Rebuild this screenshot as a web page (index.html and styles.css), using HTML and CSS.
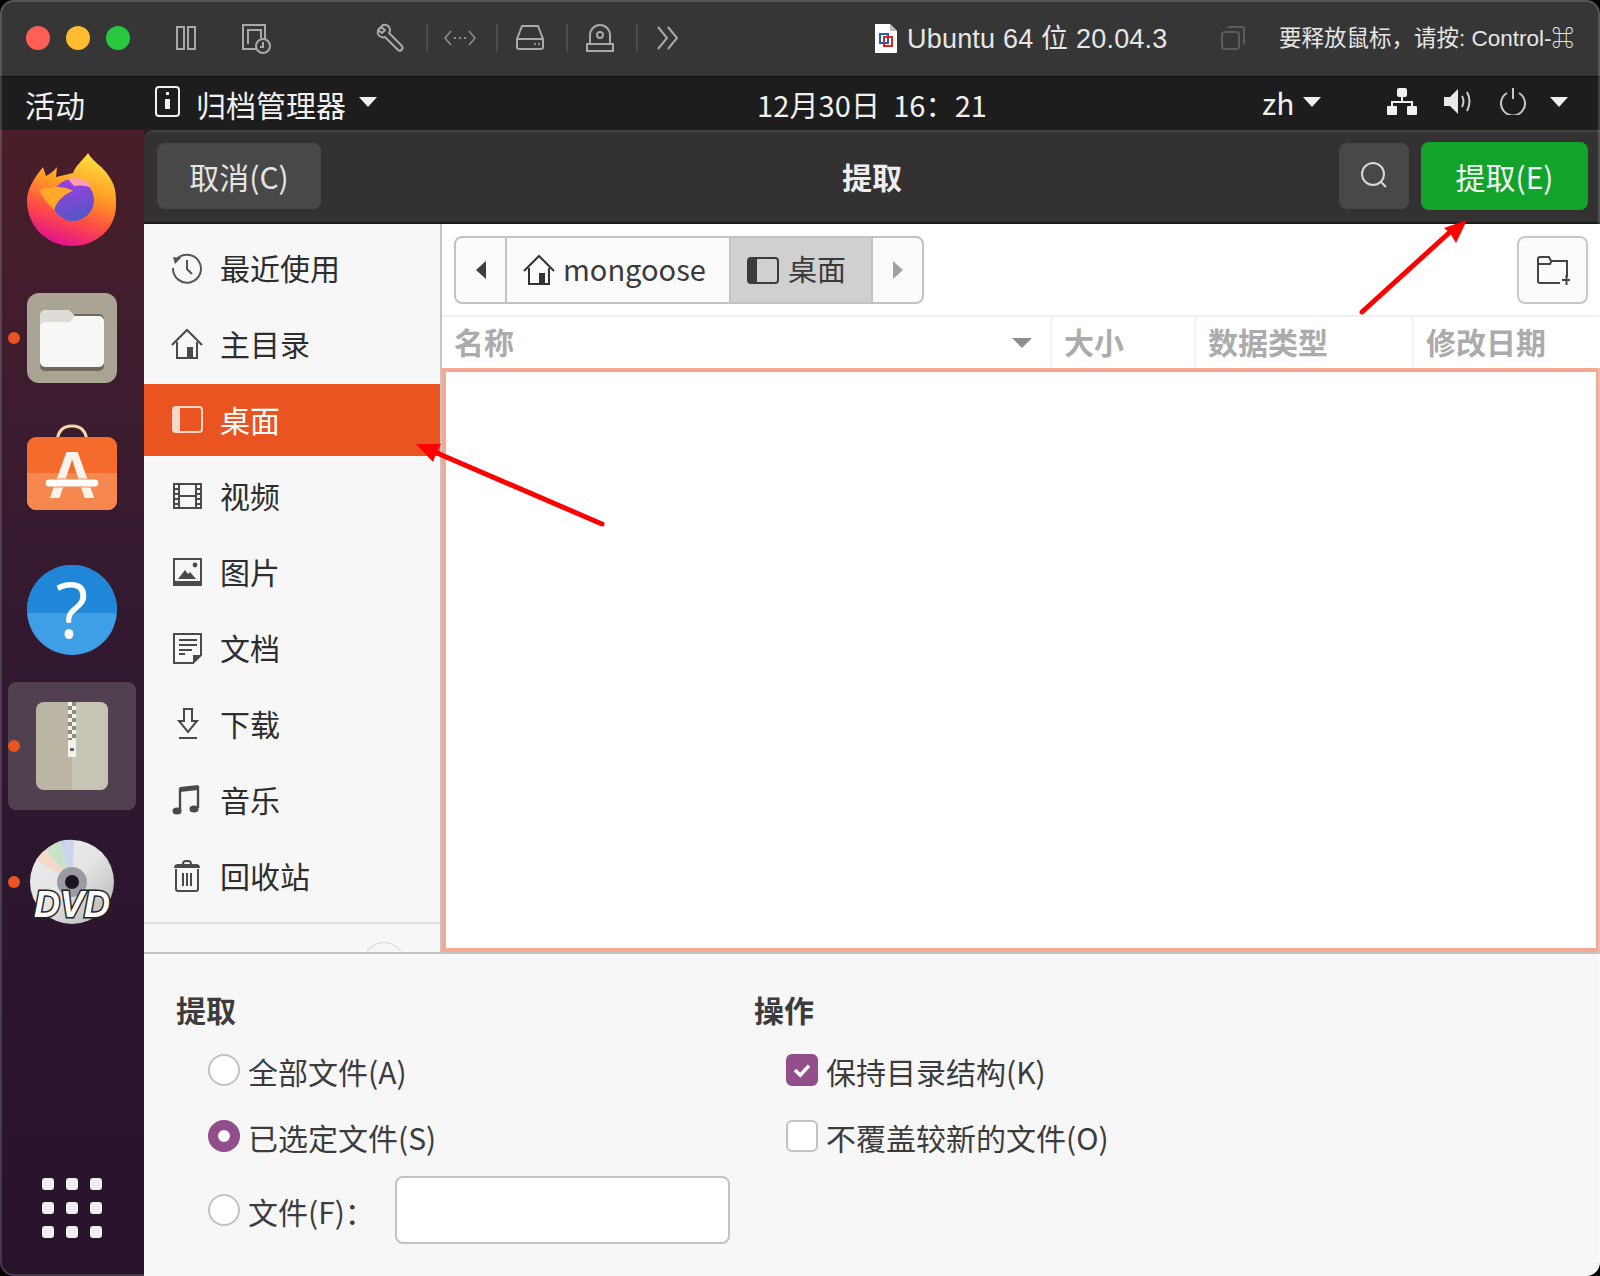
FILE: index.html
```html
<!DOCTYPE html>
<html lang="zh">
<head>
<meta charset="utf-8">
<title>提取</title>
<link rel="stylesheet" href="styles.css">
</head>
<body>
<div class="window">
  <header class="titlebar">
    <div class="lights"><span class="light red"></span><span class="light yellow"></span><span class="light green"></span></div>
    <svg class="tb-icon pause" viewBox="0 0 32 32"><g fill="none" stroke="#a9a9a9" stroke-width="2"><rect x="7" y="5" width="7" height="22"/><rect x="18" y="5" width="7" height="22"/></g></svg>
    <svg class="tb-icon snap" viewBox="0 0 32 32"><g fill="none" stroke="#a9a9a9" stroke-width="2"><path d="M18 27H3V3h22v15"/><path d="M8 22V8h13v8"/><circle cx="23" cy="24" r="7" fill="#363636"/><path d="M23 20v5h-3"/></g></svg>
    <div class="tools">
      <svg class="tb-icon" viewBox="0 0 32 32"><path d="M4 8 9 3c3-1 7 1 7 5 0 1 0 2-1 3l13 13c2 3-2 6-4 4L11 15c-1 0-2 1-3 0-3 0-5-3-4-7l4 3 3-3-4-3" fill="none" stroke="#a9a9a9" stroke-width="2" stroke-linejoin="round"/></svg>
      <span class="tool-div"></span>
      <svg class="tb-icon" viewBox="0 0 32 32"><g fill="none" stroke="#8f8f8f" stroke-width="1.6"><path d="M7 9 1 16l6 7M25 9l6 7-6 7"/></g><g fill="#8f8f8f"><rect x="10" y="15" width="2" height="2"/><rect x="15" y="15" width="2" height="2"/><rect x="20" y="15" width="2" height="2"/></g></svg>
      <span class="tool-div"></span>
      <svg class="tb-icon" viewBox="0 0 32 32"><g fill="none" stroke="#a9a9a9" stroke-width="2"><path d="M8 4h16l5 13v8a2 2 0 0 1-2 2H5a2 2 0 0 1-2-2v-8z"/><path d="M3 17h26"/></g><circle cx="21" cy="22" r="1" fill="#a9a9a9"/><circle cx="25" cy="22" r="1" fill="#a9a9a9"/></svg>
      <span class="tool-div"></span>
      <svg class="tb-icon" viewBox="0 0 32 32"><g fill="none" stroke="#a9a9a9" stroke-width="2"><path d="M6 22V13a10 10 0 0 1 20 0v9"/><circle cx="16" cy="13" r="3"/><rect x="3" y="22" width="26" height="7"/></g></svg>
      <span class="tool-div"></span>
      <svg class="tb-icon" viewBox="0 0 32 32"><path d="M4 5l9 11-9 11M14 5l9 11-9 11" fill="none" stroke="#a9a9a9" stroke-width="2"/></svg>
    </div>
    <svg class="doc" viewBox="0 0 22 29"><path d="M0 0h15l7 7v22H0z" fill="#fff"/><path d="M15 0v7h7z" fill="#bbb"/><rect x="5" y="10" width="8" height="9" fill="none" stroke="#1d5ec8" stroke-width="2"/><rect x="9" y="13" width="8" height="9" fill="none" stroke="#d8261c" stroke-width="2"/></svg>
    <span class="vm-name">Ubuntu 64 位 20.04.3</span>
    <svg class="copy" viewBox="0 0 24 24"><g fill="none" stroke="#5c5c5c" stroke-width="2"><rect x="1" y="6" width="17" height="17" rx="3"/><path d="M7 2q0-1 2-1h12q2 0 2 2v13q0 2-1 2"/></g></svg>
    <span class="hint">要释放鼠标，请按: Control-⌘</span>
  </header>

  <div class="topbar">
    <span class="activities">活动</span>
    <svg class="app-icon" viewBox="0 0 25 31"><rect x="1" y="1" width="23" height="29" rx="3" fill="none" stroke="#f2f2f2" stroke-width="2"/><rect x="11" y="6" width="3" height="3" fill="#f2f2f2"/><rect x="10" y="13" width="5" height="10" fill="#f2f2f2"/></svg>
    <span class="app-name">归档管理器</span>
    <span class="caret app-caret"></span>
    <span class="clock">12月30日&nbsp;&nbsp;16：21</span>
    <span class="lang">zh</span>
    <span class="caret lang-caret"></span>
    <svg class="tray net" viewBox="0 0 30 27"><g fill="#f0f0f0"><rect x="10" y="0" width="10" height="9" rx="2"/><rect x="0" y="18" width="10" height="9" rx="1"/><rect x="20" y="18" width="10" height="9" rx="1"/></g><path d="M15 8v6M5 19v-5h20v5" fill="none" stroke="#f0f0f0" stroke-width="2"/></svg>
    <svg class="tray vol" viewBox="0 0 28 27"><path d="M0 9h6l8-8v25l-8-8H0z" fill="#e8e8e8"/><g fill="none" stroke="#d0d0d0" stroke-width="2"><path d="M18 8q3 5 0 11"/><path d="M23 4q5 9 0 19"/></g></svg>
    <svg class="tray pow" viewBox="0 0 26 27"><path d="M7 5a12 12 0 1 0 12 0M13 0v11" fill="none" stroke="#c8c8c8" stroke-width="2"/></svg>
    <span class="caret sys-caret"></span>
  </div>

  <div class="desktop">
    <nav class="dock">
      <div class="tile">
        <svg class="dock-art" viewBox="0 0 128 128"><defs>
          <linearGradient id="ffa" x1=".8" y1="0" x2=".45" y2="1"><stop offset="0" stop-color="#ffe83f"/><stop offset=".42" stop-color="#ff9c24"/><stop offset=".72" stop-color="#ff4d44"/><stop offset="1" stop-color="#e4148c"/></linearGradient>
          <linearGradient id="ffb" x1="0" y1="0" x2=".3" y2="1"><stop offset="0" stop-color="#a63be0"/><stop offset="1" stop-color="#5a55c8"/></linearGradient>
        </defs>
          <path d="M64 108C39 108 19 88 19 63c0-12 7-23 16-34l3 9c4-2 8-5 11-9l-1 10 17-4c3-8 11-14 15-20 4 8 16 14 22 25 6 9 6 17 6 27 0 24-20 41-44 41z" fill="url(#ffa)"/>
          <circle cx="65" cy="62" r="21" fill="url(#ffb)"/>
          <path d="M31 52c11-3 24-5 34 1-7 2-16 9-19 19-6-6-11-12-15-20z" fill="#ffa82a"/>
          <path d="M60 41c10-3 20 1 24 9-6-3-13-3-18-2z" fill="#ff9fb0"/>
        </svg>
      </div>
      <div class="tile">
        <span class="run-dot"></span>
        <svg class="dock-art" viewBox="0 0 128 128"><rect x="19" y="19" width="90" height="90" rx="12" fill="#a9a494"/><rect x="32" y="40" width="64" height="57" rx="5" fill="#6e675a"/><path d="M32 41a5 5 0 0 1 5-5h24l6 6v10H32z" fill="#dfdbd6"/><path d="M32 53a5 5 0 0 1 5-5h25l5-6h24a5 5 0 0 1 5 5v41a5 5 0 0 1-5 5H37a5 5 0 0 1-5-5z" fill="#f8f7f6"/></svg>
      </div>
      <div class="tile">
        <svg class="dock-art" viewBox="0 0 128 128"><path d="M49 34q0-18 15-18t15 18" fill="none" stroke="#f5d5a8" stroke-width="3"/><rect x="19" y="27" width="90" height="73" rx="9" fill="#f46b2c"/><path d="M19 63h90v28a9 9 0 0 1-9 9H28a9 9 0 0 1-9-9z" fill="#f6884f"/><text class="store-a" x="64" y="88" text-anchor="middle">A</text><rect x="37" y="69" width="54" height="8" rx="4" fill="#fff" stroke="#f6884f"/></svg>
      </div>
      <div class="tile">
        <svg class="dock-art" viewBox="0 0 128 128"><circle cx="64" cy="64" r="45" fill="#3f9fe6"/><path d="M19.100 67A45 45 0 1 1 108.900 67z" fill="#1f86d8"/><text class="help-q" x="64" y="92" text-anchor="middle">?</text></svg>
      </div>
      <div class="tile active">
        <span class="run-dot"></span>
        <svg class="dock-art" viewBox="0 0 128 128"><defs><pattern id="zip" width="8" height="8" patternUnits="userSpaceOnUse" x="60" y="20"><rect width="8" height="8" fill="#8f8a7c"/><rect width="4" height="4" fill="#f2f1ec"/><rect x="4" y="4" width="4" height="4" fill="#f2f1ec"/></pattern></defs><rect x="28" y="20" width="72" height="88" rx="8" fill="#bbb6a4"/><path d="M64 20h28a8 8 0 0 1 8 8v72a8 8 0 0 1-8 8H64z" fill="#c8c4b4"/><rect x="60" y="20" width="8" height="38" fill="url(#zip)"/><rect x="60" y="58" width="8" height="17" fill="#f2f1ec"/><rect x="62" y="66" width="4" height="3" fill="#666"/></svg>
      </div>
      <div class="tile">
        <span class="run-dot"></span>
        <svg class="dock-art" viewBox="0 0 128 128"><defs><linearGradient id="dvd" x1="0" y1="0" x2="1" y2="1"><stop offset="0" stop-color="#eee"/><stop offset=".5" stop-color="#e4e4e4"/><stop offset="1" stop-color="#b0b0b0"/></linearGradient></defs><circle cx="64" cy="64" r="42" fill="url(#dvd)"/><path d="M64 64 38 32a42 42 0 0 1 14-9z" fill="#c8e4c8"/><path d="M64 64 52 23a42 42 0 0 1 14-1z" fill="#ccd4ec"/><path d="M64 64 28 42a42 42 0 0 1 10-10z" fill="#f4d8c8"/><circle cx="64" cy="64" r="15" fill="#9b9aa0"/><circle cx="64" cy="64" r="7" fill="#1d1220"/><text class="dvd-t" x="64" y="99" text-anchor="middle">DVD</text></svg>
      </div>
      <div class="app-grid"><i></i><i></i><i></i><i></i><i></i><i></i><i></i><i></i><i></i></div>
    </nav>

    <main class="dialog">
      <div class="headerbar">
        <button class="hb-btn cancel">取消(C)</button>
        <span class="hb-title">提取</span>
        <button class="hb-btn search"><svg viewBox="0 0 30 30" class="search-ic"><g fill="none" stroke="#d8d8d8" stroke-width="2"><circle cx="14" cy="13" r="11"/><path d="M22 21l5 5"/></g></svg></button>
        <button class="hb-btn extract">提取(E)</button>
      </div>

      <div class="body">
        <aside class="sidebar">
          <ul class="places">
            <li class="place"><svg class="pl-ic" viewBox="0 0 32 32"><g fill="none" stroke="#555" stroke-width="2"><path d="M5 8a14 14 0 1 1-3 8"/><path d="M16 8v9l5 5"/></g><path d="M2 5l8 1-6 6z" fill="#555"/></svg><span class="pl-text">最近使用</span></li>
            <li class="place"><svg class="pl-ic" viewBox="0 0 32 32"><g fill="none" stroke="#4a4a4a" stroke-width="2"><path d="M1 17 16 2l15 15"/><path d="M6 14v16h20V14"/></g><rect x="16" y="19" width="6" height="11" fill="#4a4a4a"/></svg><span class="pl-text">主目录</span></li>
            <li class="place selected"><svg class="pl-ic" viewBox="0 0 32 32"><rect x="2" y="3" width="29" height="25" rx="3" fill="none" stroke="#fbd8cb" stroke-width="2"/><path d="M5 3h4v25H5a3 3 0 0 1-3-3V6a3 3 0 0 1 3-3z" fill="#fbd8cb"/></svg><span class="pl-text">桌面</span></li>
            <li class="place"><svg class="pl-ic" viewBox="0 0 32 32"><g fill="none" stroke="#4a4a4a" stroke-width="2"><rect x="3" y="4" width="27" height="24"/><path d="M8 4v24M25 4v24M8 16h17"/><path d="M3 9h5M3 14h5M3 19h5M3 24h5M25 9h5M25 14h5M25 19h5M25 24h5"/></g></svg><span class="pl-text">视频</span></li>
            <li class="place"><svg class="pl-ic" viewBox="0 0 32 32"><rect x="3" y="3" width="27" height="26" fill="none" stroke="#4a4a4a" stroke-width="2"/><path d="M4 25h25v4H4zM7 23l7-9 3 4 2-2 6 7z" fill="#4a4a4a"/><circle cx="24" cy="9" r="2.4" fill="#4a4a4a"/></svg><span class="pl-text">图片</span></li>
            <li class="place"><svg class="pl-ic" viewBox="0 0 32 32"><path d="M3 2h27v21l-8 8H3z" fill="none" stroke="#4a4a4a" stroke-width="2"/><path d="M22 31v-8h8z" fill="#4a4a4a"/><path d="M8 8h18M8 13h18M8 18h13M8 22h6" stroke="#4a4a4a" stroke-width="2"/></svg><span class="pl-text">文档</span></li>
            <li class="place"><svg class="pl-ic" viewBox="0 0 32 32"><path d="M13 1h8v12h5L17 24 8 13h5zM8 30h18" fill="none" stroke="#4a4a4a" stroke-width="2"/></svg><span class="pl-text">下载</span></li>
            <li class="place"><svg class="pl-ic" viewBox="0 0 32 32"><path d="M9 27V5l18-2v21" fill="none" stroke="#4a4a4a" stroke-width="2.4"/><path d="M9 3l18-2v5L9 8z" fill="#4a4a4a"/><ellipse cx="6" cy="27" rx="4.5" ry="3.5" fill="#4a4a4a"/><ellipse cx="23" cy="25" rx="4.5" ry="3.5" fill="#4a4a4a"/></svg><span class="pl-text">音乐</span></li>
            <li class="place"><svg class="pl-ic" viewBox="0 0 32 32"><g fill="none" stroke="#4a4a4a" stroke-width="2"><path d="M5 9v20q0 2 2 2h18q2 0 2-2V9"/><path d="M12 4q0-3 3-3h2q3 0 3 3M12 13v13M16 13v13M20 13v13"/></g><path d="M3 8q0-4 4-4h18q4 0 4 4z" fill="#4a4a4a"/></svg><span class="pl-text">回收站</span></li>
          </ul>
          <div class="side-foot"><span class="side-arc"></span></div>
        </aside>

        <section class="main">
          <div class="toolbar">
            <div class="pathbar">
              <div class="seg back"><span class="tri tri-l"></span></div>
              <div class="seg home"><svg class="seg-ic" viewBox="0 0 32 32"><g fill="none" stroke="#333" stroke-width="2"><path d="M1 17 16 2l15 15"/><path d="M6 14v16h20V14"/></g><rect x="16" y="19" width="6" height="11" fill="#333"/></svg><span class="seg-text">mongoose</span></div>
              <div class="seg current"><svg class="seg-ic" viewBox="0 0 32 32"><rect x="1" y="4" width="30" height="25" rx="3" fill="none" stroke="#3b3b3b" stroke-width="2"/><path d="M4 4h6v25H4a3 3 0 0 1-3-3V7a3 3 0 0 1 3-3z" fill="#3b3b3b"/></svg><span class="seg-text">桌面</span></div>
              <div class="seg next"><span class="tri tri-r"></span></div>
            </div>
            <button class="newfolder"><svg viewBox="0 0 34 34" class="nf-ic"><path d="M31 24V8H15l-2-4H4Q2 4 2 6v22q0 2 2 2h20M2 11h12l2-4M26 27h9M30.500 22v10" fill="none" stroke="#444" stroke-width="2"/></svg></button>
          </div>
          <div class="columns">
            <div class="col col-name"><span class="col-text">名称</span><span class="sort"></span></div>
            <div class="col col-size"><span class="col-text">大小</span></div>
            <div class="col col-type"><span class="col-text">数据类型</span></div>
            <div class="col col-date"><span class="col-text">修改日期</span></div>
          </div>
          <div class="filelist"></div>
        </section>
      </div>

      <div class="options">
        <div class="opt-col">
          <div class="opt-title">提取</div>
          <label class="opt"><span class="radio"></span><span class="opt-text">全部文件(A)</span></label>
          <label class="opt"><span class="radio on"></span><span class="opt-text">已选定文件(S)</span></label>
          <label class="opt opt-file"><span class="radio"></span><span class="opt-text">文件(F)：</span><span class="entry"></span></label>
        </div>
        <div class="opt-col col-right">
          <div class="opt-title">操作</div>
          <label class="opt"><span class="check on"><svg viewBox="0 0 32 32" class="tick"><path d="M8 16l6 6 10-11" fill="none" stroke="#fff" stroke-width="4"/></svg></span><span class="opt-text">保持目录结构(K)</span></label>
          <label class="opt"><span class="check"></span><span class="opt-text">不覆盖较新的文件(O)</span></label>
        </div>
      </div>
    </main>
  </div>

  <svg class="arrows" viewBox="0 0 1600 1276">
    <path d="M602 524 430 450" stroke="#f00" stroke-width="5" stroke-linecap="round" fill="none"/>
    <path d="M416 444h25l-4 7-4 11z" fill="#f00"/>
    <path d="M1362 312 1450 232" stroke="#f00" stroke-width="5" stroke-linecap="round" fill="none"/>
    <path d="M1467 220l-23 8 6 5 6 10z" fill="#f00"/>
  </svg>
</div>
</body>
</html>
```
FILE: styles.css
```css
* { box-sizing: border-box; }
html, body { margin: 0; padding: 0; background: #000; }
body { width: 1600px; height: 1276px; font-family: "Noto Sans CJK SC", "Noto Sans", sans-serif; overflow: hidden; }
button { font: inherit; border: 0; padding: 0; }
ul { list-style: none; margin: 0; padding: 0; }

.window { position: relative; width: 1600px; height: 1276px; border-radius: 14px; overflow: hidden; display: flex; flex-direction: column; background: #1d1d1d; }
.window::after { content: ""; position: absolute; inset: 0; border-radius: 14px; border: 2px solid rgba(255,255,255,.16); pointer-events: none; }

/* mac title bar */
.titlebar { height: 77px; flex: none; background: #363636; border-bottom: 1px solid #0a0a0a; display: flex; align-items: center; padding-left: 26px; }
.lights { display: flex; gap: 16px; }
.light { width: 24px; height: 24px; border-radius: 50%; }
.red { background: #ff5f57; }
.yellow { background: #febc2e; }
.green { background: #28c840; }
.tb-icon { width: 32px; height: 32px; flex: none; }
.pause { margin-left: 40px; }
.snap { margin-left: 38px; }
.tools { margin-left: 102px; display: flex; align-items: center; gap: 18px; }
.tool-div { width: 2px; height: 28px; background: #4b4b4b; margin: 0 -2px 0 2px; }
.doc { width: 22px; height: 29px; margin-left: 189px; flex: none; }
.vm-name { margin-left: 10px; margin-top: -4px; font-size: 27px; letter-spacing: .2px; color: #e6e6e6; font-family: "Liberation Sans", "Noto Sans CJK SC", sans-serif; white-space: nowrap; width: 260px; }
.copy { width: 24px; height: 24px; margin-left: 54px; flex: none; }
.hint { margin-left: 34px; margin-top: -4px; font-size: 22.500px; color: #e6e6e6; white-space: nowrap; font-family: "Liberation Sans", "Noto Sans CJK SC", sans-serif; }

/* gnome top bar */
.topbar { height: 53px; flex: none; background: #1d1d1d; display: flex; align-items: center; color: #f0f0f0; font-size: 30px; padding-left: 25px; white-space: nowrap; }
.activities { width: 58px; }
.app-icon { width: 25px; height: 31px; margin-left: 72px; margin-top: -5px; flex: none; }
.app-name { margin-left: 16px; }
.caret { width: 0; height: 0; border-left: 9.500px solid transparent; border-right: 9.500px solid transparent; border-top: 10px solid #f0f0f0; flex: none; }
.app-caret { margin-left: 13px; margin-top: -4px; }
.clock { position: absolute; left: 757px; font-size: 29px; letter-spacing: .1px; }
.lang { margin-left: 885px; margin-top: -4px; width: 30px; }
.lang-caret { margin-left: 11px; margin-top: -4px; }
.tray { flex: none; height: 27px; margin-top: -4px; }
.net { width: 30px; margin-left: 66px; }
.vol { width: 28px; margin-left: 27px; }
.pow { width: 26px; margin-left: 28px; }
.sys-caret { margin-left: 24px; margin-top: -4px; }

/* desktop */
.desktop { flex: 1; display: flex; min-height: 0; background: #2f1a26; }
.dock { width: 144px; flex: none; padding: 8px 8px 0; display: flex; flex-direction: column; gap: 8px; background: linear-gradient(to bottom, #4a1e28 0, #3e1c2e 20%, #2f1830 50%, #27132a 100%); }
.tile { position: relative; width: 128px; height: 128px; flex: none; border-radius: 8px; }
.tile.active { background: #51404f; }
.dock-art { display: block; width: 128px; height: 128px; }
.run-dot { position: absolute; left: 0; top: 58px; width: 12px; height: 12px; border-radius: 50%; background: #e95420; }
.store-a { font: 700 66px "Liberation Sans", sans-serif; fill: #fdf3ec; }
.help-q { font: 400 76px "Open Sans", "Noto Sans", sans-serif; fill: #fff; }
.dvd-t { font: italic 700 36px "Liberation Sans", sans-serif; fill: #fff; stroke: #222; stroke-width: 3px; paint-order: stroke; letter-spacing: 0; }
.app-grid { margin: auto 0 0 34px; padding-bottom: 38px; width: 60px; display: grid; grid-template-columns: repeat(3, 12px); gap: 12px; }
.app-grid i { width: 12px; height: 12px; border-radius: 3px; background: #eee; }

/* dialog */
.dialog { flex: 1; min-width: 0; display: flex; flex-direction: column; }
.headerbar { position: relative; height: 94px; flex: none; background: #333132; border-bottom: 2px solid #1c1c1c; border-top: 2px solid #424242; display: flex; align-items: center; padding: 0 12px 2px 13px; border-top-left-radius: 10px; color: #eee; }
.hb-btn { height: 66px; border-radius: 8px; background: #484848; color: #e4e4e4; font-size: 30px; display: flex; align-items: center; justify-content: center; }
.cancel { width: 164px; }
.hb-title { position: absolute; left: 0; right: 0; text-align: center; font-size: 30px; font-weight: 700; color: #eeeeee; pointer-events: none; }
.search { width: 70px; margin-left: auto; }
.search-ic { width: 30px; height: 30px; }
.extract { width: 167px; height: 68px; margin-left: 12px; background: #12a32b; color: #f4f4f4; }

.body { flex: 1; display: flex; min-height: 0; background: #fff; border-bottom: 2px solid #c4c4c4; height: 730px; }
.sidebar { width: 298px; flex: none; background: #f7f7f7; border-right: 2px solid #c4c4c4; display: flex; flex-direction: column; padding-top: 8px; }
.places { display: flex; flex-direction: column; gap: 4px; }
.place { height: 72px; display: flex; align-items: center; padding-left: 27px; gap: 17px; font-size: 30px; color: #2d2d2d; }
.pl-text { margin-top: -2px; }
.place.selected { background: #e95420; color: #fff; }
.pl-ic { width: 32px; height: 32px; flex: none; }
.side-foot { margin-top: 10px; flex: 1; border-top: 2px solid #dfdfdf; overflow: hidden; position: relative; }
.side-arc { position: absolute; left: 219px; top: 18px; width: 42px; height: 42px; border: 1px solid #d4d4d4; border-radius: 50%; }

.main { flex: 1; min-width: 0; display: flex; flex-direction: column; background: #fff; }
.toolbar { height: 93px; flex: none; display: flex; align-items: flex-start; padding: 12px 12px 0 12px; justify-content: space-between; border-bottom: 2px solid #f0f0f0; }
.pathbar { width: 470px; height: 68px; display: flex; border: 2px solid #c2c2c2; border-radius: 8px; overflow: hidden; background: #fbfbfb; }
.seg { display: flex; align-items: center; font-size: 29px; color: #3a3a3a; border-right: 2px solid #c2c2c2; }
.seg-text { margin-top: -4px; }
.back { width: 51px; justify-content: center; }
.home { width: 224px; padding-left: 16px; gap: 8px; }
.current { width: 142px; background: #d0d0d0; padding-left: 16px; gap: 9px; }
.next { flex: 1; justify-content: center; border-right: 0; }
.seg-ic { width: 32px; height: 32px; flex: none; }
.tri { width: 0; height: 0; border-top: 9px solid transparent; border-bottom: 9px solid transparent; }
.tri-l { border-right: 10px solid #3d3d3d; }
.tri-r { border-left: 10px solid #a0a0a0; }
.newfolder { width: 71px; height: 68px; border: 2px solid #c8c8c8; border-radius: 8px; background: #fbfbfb; display: flex; align-items: center; justify-content: center; }
.nf-ic { width: 34px; height: 34px; }
.columns { height: 51px; flex: none; display: flex; font-size: 30px; font-weight: 700; color: #ababab; }
.col { display: flex; align-items: center; padding-left: 12px; border-right: 2px solid #f2f2f2; }
.col-text { margin-top: -4px; }
.col-name { width: 610px; justify-content: space-between; padding-right: 18px; }
.col-size { width: 144px; }
.col-type { width: 218px; }
.col-date { flex: 1; border-right: 0; }
.sort { width: 0; height: 0; border-left: 10px solid transparent; border-right: 10px solid transparent; border-top: 10px solid #8e8e8e; }
.filelist { flex: 1; border: 4px solid #f4a995; background: #fff; }

/* options */
.options { height: 322px; flex: none; display: flex; padding: 31px 0 0 32px; background: #f7f7f7; }
.opt-col { width: 578px; display: flex; flex-direction: column; }
.opt-title { height: 52px; padding-bottom: 4px; display: flex; align-items: center; font-size: 30px; font-weight: 700; color: #3c3c3c; }
.opt { height: 66px; display: flex; align-items: center; gap: 8px; margin-left: 32px; font-size: 30px; color: #3c3c3c; }
.opt-text { margin-top: 2px; }
.opt-file { height: 72px; margin-top: 5px; }
.radio { width: 32px; height: 32px; border-radius: 50%; background: #fff; border: 2px solid #c2c2c2; flex: none; }
.radio.on { background: #fff; border: 10px solid #924d8b; }
.entry { width: 335px; height: 68px; background: #fff; border: 2px solid #c2c2c2; border-radius: 8px; margin-left: 12px; }
.check { width: 32px; height: 32px; border-radius: 6px; background: #fff; border: 2px solid #c2c2c2; flex: none; display: block; }
.check.on { background: #924d8b; border-color: #924d8b; }
.tick { display: block; width: 28px; height: 28px; }

.arrows { position: absolute; left: 0; top: 0; width: 1600px; height: 1276px; pointer-events: none; }
```
